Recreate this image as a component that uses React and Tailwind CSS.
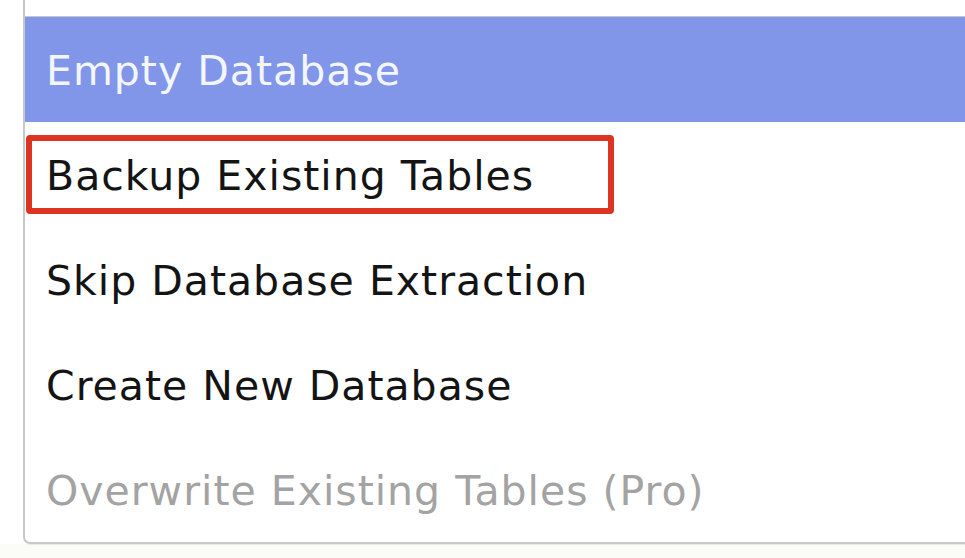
const options = [
  { label: 'Empty Database', state: 'active' },
  { label: 'Backup Existing Tables', state: 'marked' },
  { label: 'Skip Database Extraction', state: 'normal' },
  { label: 'Create New Database', state: 'normal' },
  { label: 'Overwrite Existing Tables (Pro)', state: 'disabled' },
];

const OptionRow = ({ label, state }) => {
  const tone =
    state === 'active'
      ? 'bg-[#8196e9] text-[#f4f6ff]'
      : state === 'disabled'
      ? 'text-[#a3a3a3]'
      : 'text-[#141414]';

  return (
    <div className={`relative h-[105px] flex items-center pl-[21px] pt-[3px] ${tone}`}>
      <span className="leading-none tracking-[1px]">{label}</span>
      {state === 'marked' && (
        <div className="absolute left-[1px] top-[13px] w-[588px] h-[79px] border-[6px] border-[#dd3322] rounded-[4px]" />
      )}
    </div>
  );
};

export default function App() {
  return (
    <div
      className="w-[965px] h-[558px] bg-[#fbfbf8] overflow-hidden flex flex-col"
      style={{ fontFamily: '"DejaVu Sans", Verdana, sans-serif' }}
    >
      <div className="bg-white pl-[23px] flex-none">
        <div className="h-[16px] border-l-2 border-[#c4c4c4]" />
        <div className="border-l-2 border-t border-b-2 border-[#c8c8c8] rounded-bl-[7px] text-[41px] shadow-[0_1px_1px_rgba(0,0,0,0.08)]">
          {options.map((o) => (
            <OptionRow key={o.label} {...o} />
          ))}
        </div>
      </div>
    </div>
  );
}
